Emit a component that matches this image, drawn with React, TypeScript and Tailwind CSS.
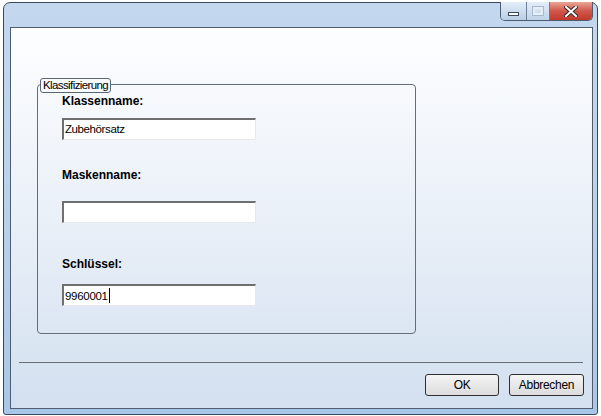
export default function App() {
  const font = { fontFamily: '"Liberation Sans", Arial, sans-serif' };

  return (
    <div className="w-[601px] h-[416px] bg-white pt-[2px] pl-[3px]" style={font}>
      {/* window frame */}
      <div className="w-[595px] h-[413px] rounded-t-[7px] rounded-b-[3px] border border-[#3b4858] bg-gradient-to-b from-[#c3d8ef] via-[#b9d2ec] to-[#a8c7e8] flex flex-col pl-[6px] pr-[4px] pb-[5px]">
        {/* title bar */}
        <div className="h-[24px] flex justify-end items-start -mr-[1px] pr-[1px]">
          <div className="flex h-[19px] -mt-[1px] border border-t-0 border-[#4e5d6e] rounded-b-[5px] overflow-hidden">
            <div className="w-[26px] h-full bg-gradient-to-b from-[#e4eef9] to-[#b8cde5] border-r border-[#6c7f96] flex items-end justify-center pb-[4px]">
              <div className="w-[11px] h-[4px] bg-white border border-[#3d4a5a]" />
            </div>
            <div className="w-[23px] h-full bg-gradient-to-b from-[#e4eef9] to-[#bfd2e8] border-r border-[#6c7f96] flex items-center justify-center">
              <div className="w-[10px] h-[8px] border-2 border-[#e6eef8] outline outline-1 outline-[#a8b8cc]" />
            </div>
            <div className="w-[42px] h-full bg-gradient-to-b from-[#e9a696] via-[#d0574a] to-[#c0392b] flex items-center justify-center">
              <svg width="14" height="11" viewBox="0 0 14 11">
                <path d="M2 1 L12 10 M12 1 L2 10" stroke="#3a2a2a" strokeWidth="4" strokeLinecap="square" />
                <path d="M2 1 L12 10 M12 1 L2 10" stroke="#ffffff" strokeWidth="2" strokeLinecap="square" />
              </svg>
            </div>
          </div>
        </div>

        {/* client area */}
        <div className="w-[583px] h-[382px] border border-[#4f5d6d] bg-gradient-to-b from-[#fdfeff] via-[#eaf0f8] to-[#d3e0f0] flex flex-col">
          {/* group box */}
          <div className="relative ml-[26px] mt-[56px] w-[379px] h-[250px] border border-[#636e7a] rounded-[4px] pl-[24px] pt-[9px] flex flex-col">
            <div className="absolute left-[2px] -top-[7px] px-[2px] h-[15px] border border-[#5a6673] rounded-[3px] bg-[#f8fafd] text-[11.5px] leading-[13px] text-black tracking-[-0.6px]">
              Klassifizierung
            </div>

            <div className="text-[12px] leading-[14px] font-bold text-black">Klassenname:</div>
            <div className="mt-[10px] w-[194px] h-[22px] bg-white border-t-2 border-l-2 border-t-[#6f6f6f] border-l-[#6f6f6f] border-b border-r border-b-[#e8e8e8] border-r-[#e8e8e8] text-[11.5px] leading-[18px] pl-[1px] tracking-[-0.4px]">
              Zubehörsatz
            </div>

            <div className="mt-[28px] text-[12px] leading-[14px] font-bold text-black">Maskenname:</div>
            <div className="mt-[19px] w-[194px] h-[22px] bg-white border-t-2 border-l-2 border-t-[#6f6f6f] border-l-[#6f6f6f] border-b border-r border-b-[#e8e8e8] border-r-[#e8e8e8]" />

            <div className="mt-[34px] text-[12px] leading-[14px] font-bold text-black">Schlüssel:</div>
            <div className="mt-[13px] w-[194px] h-[22px] bg-white border-t-2 border-l-2 border-t-[#6f6f6f] border-l-[#6f6f6f] border-b border-r border-b-[#e8e8e8] border-r-[#e8e8e8] text-[11.5px] leading-[18px] pl-[1px] flex items-center tracking-[-0.3px]">
              9960001
              <span className="inline-block w-[1px] h-[15px] bg-black ml-[1px]" />
            </div>
          </div>

          {/* separator */}
          <div className="mt-[28px] ml-[8px] w-[564px] h-[1px] bg-[#6a6e74]" />

          {/* buttons */}
          <div className="mt-[11px] flex justify-end gap-[10px] pr-[8px]">
            <button className="w-[74px] h-[22px] rounded-[3px] border border-[#2f2f2f] bg-gradient-to-b from-[#f4f4f4] to-[#dcdcdc] text-[12px] text-black tracking-[-0.3px]">
              OK
            </button>
            <button className="w-[75px] h-[22px] rounded-[3px] border border-[#2f2f2f] bg-gradient-to-b from-[#f4f4f4] to-[#dcdcdc] text-[12px] text-black tracking-[-0.3px]">
              Abbrechen
            </button>
          </div>
        </div>
      </div>
    </div>
  );
}
